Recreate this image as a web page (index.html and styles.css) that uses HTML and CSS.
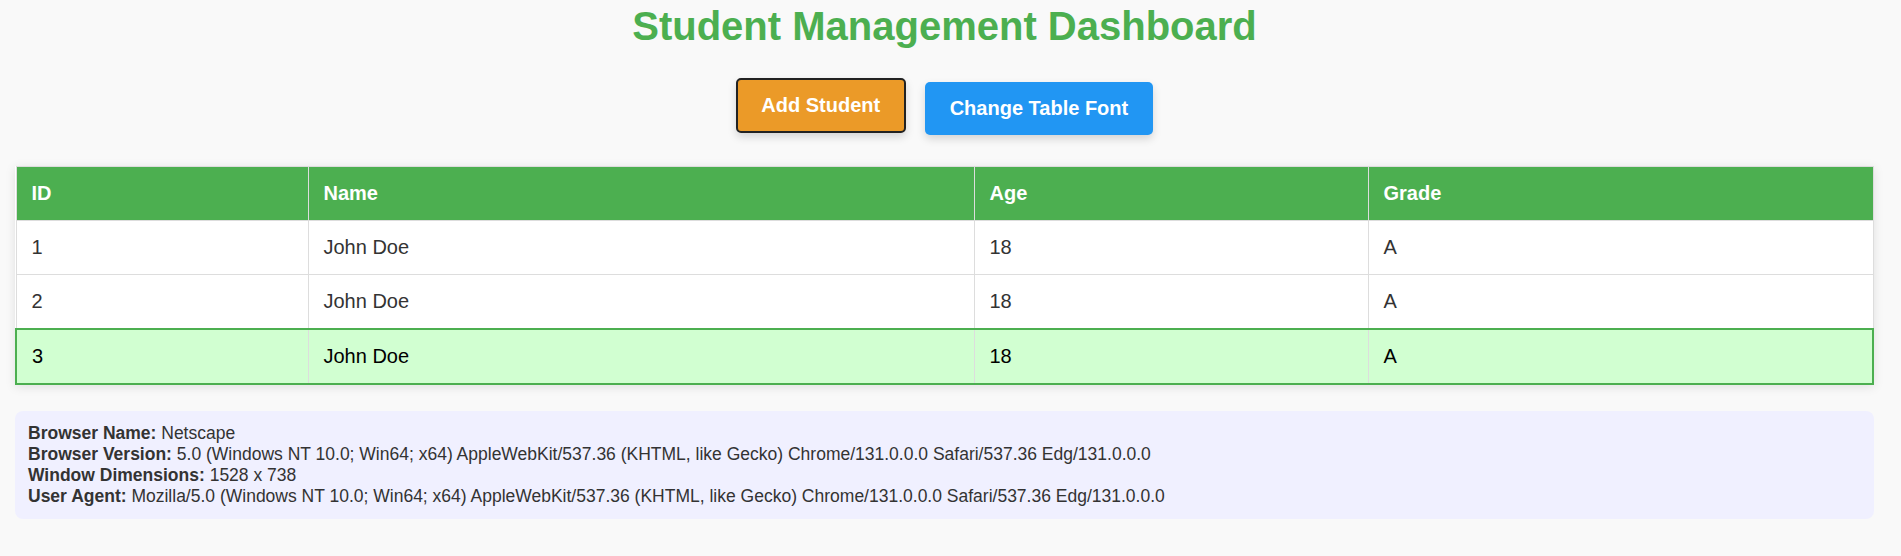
FILE: index.html
```html
<!DOCTYPE html>
<html lang="en">
<head>
<meta charset="utf-8">
<title>Student Management Dashboard</title>
<link rel="stylesheet" href="styles.css">
</head>
<body>
<h1 class="title">Student Management Dashboard</h1>
<div class="actions">
  <button class="btn btn-add">Add Student</button>
  <button class="btn btn-font">Change Table Font</button>
</div>
<table class="students">
  <colgroup>
    <col class="c-id"><col class="c-name"><col class="c-age"><col class="c-grade">
  </colgroup>
  <thead>
    <tr><th>ID</th><th>Name</th><th>Age</th><th>Grade</th></tr>
  </thead>
  <tbody>
    <tr><td>1</td><td>John Doe</td><td>18</td><td>A</td></tr>
    <tr><td>2</td><td>John Doe</td><td>18</td><td>A</td></tr>
    <tr class="selected"><td>3</td><td>John Doe</td><td>18</td><td>A</td></tr>
  </tbody>
</table>
<div class="info">
  <div><strong>Browser Name:</strong> Netscape</div>
  <div><strong>Browser Version:</strong> 5.0 (Windows NT 10.0; Win64; x64) AppleWebKit/537.36 (KHTML, like Gecko) Chrome/131.0.0.0 Safari/537.36 Edg/131.0.0.0</div>
  <div><strong>Window Dimensions:</strong> 1528 x 738</div>
  <div><strong>User Agent:</strong> Mozilla/5.0 (Windows NT 10.0; Win64; x64) AppleWebKit/537.36 (KHTML, like Gecko) Chrome/131.0.0.0 Safari/537.36 Edg/131.0.0.0</div>
</div>
</body>
</html>
```
FILE: styles.css
```css
* { box-sizing: border-box; }
html, body { margin: 0; }
body {
  background: #f9f9f9;
  font-family: "Liberation Sans", Arial, sans-serif;
  color: #333;
  padding: 3px 27px 0 15px;
}
.title {
  margin: 0;
  text-align: center;
  color: #4caf50;
  font-size: 40px;
  font-weight: bold;
  line-height: 46px;
}
.actions {
  display: flex;
  justify-content: center;
  align-items: flex-start;
  gap: 19px;
  margin-top: 29px;
}
.btn {
  font-family: "Liberation Sans", Arial, sans-serif;
  font-weight: bold;
  color: #fff;
  border-radius: 5px;
  cursor: pointer;
  box-shadow: 0 4px 8px rgba(0,0,0,0.15);
  font-size: 20px;
  line-height: 23px;
}
.btn-add {
  background: #eb9a28;
  border: 2px solid #222;
  padding: 14px 23.5px;
}
.btn-font {
  background: #2196f3;
  border: none;
  padding: 15px 25px;
  margin-top: 4px;
}
.students {
  width: 100%;
  margin-top: 31px;
  border-collapse: collapse;
  table-layout: fixed;
  background: #fff;
  box-shadow: 0 2px 10px rgba(0,0,0,0.1);
  font-size: 20px;
}
.c-id { width: 292px; }
.c-name { width: 666px; }
.c-age { width: 394px; }
.c-grade { width: auto; }
.students th, .students td {
  border: 1px solid #ddd;
  padding: 15px;
  text-align: left;
  line-height: 23px;
}
.students th {
  background: #4caf50;
  color: #fff;
  font-weight: bold;
}
.students td { color: #333; }
.students tr.selected td {
  background: #d1ffd1;
  color: #000;
  border-top: 2px solid #4caf50;
  border-bottom: 2px solid #4caf50;
}
.students tr.selected td:first-child { border-left: 2px solid #4caf50; }
.students tr.selected td:last-child { border-right: 2px solid #4caf50; }
.info {
  margin-top: 26px;
  background: #f0f0ff;
  border-radius: 8px;
  padding: 12px 13px;
  font-size: 17.5px;
  line-height: 21px;
  color: #333;
}
.info strong { color: #333; }
```
